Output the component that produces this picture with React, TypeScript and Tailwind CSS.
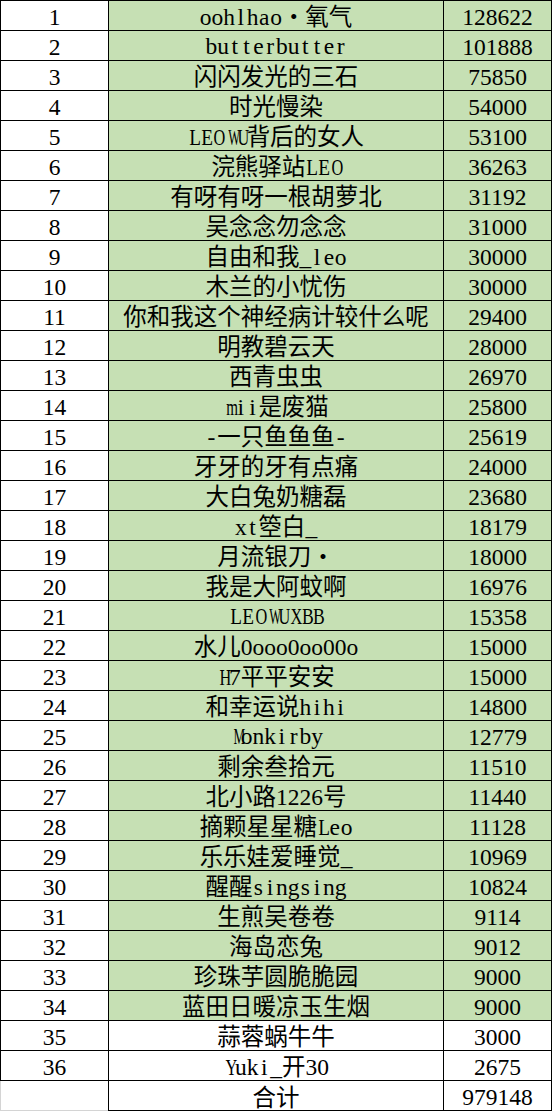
const ROWS: [string, number][] = [
  ["oohlhao•氧气", 128622],
  ["butterbutter", 101888],
  ["闪闪发光的三石", 75850],
  ["时光慢染", 54000],
  ["LEOWU背后的女人", 53100],
  ["浣熊驿站LEO", 36263],
  ["有呀有呀一根胡萝北", 31192],
  ["吴念念勿念念", 31000],
  ["自由和我_leo", 30000],
  ["木兰的小忧伤", 30000],
  ["你和我这个神经病计较什么呢", 29400],
  ["明教碧云天", 28000],
  ["西青虫虫", 26970],
  ["mii是废猫", 25800],
  ["-一只鱼鱼鱼-", 25619],
  ["牙牙的牙有点痛", 24000],
  ["大白兔奶糖磊", 23680],
  ["xt箜白_", 18179],
  ["月流银刀•", 18000],
  ["我是大阿蚊啊", 16976],
  ["LEOWUXBB", 15358],
  ["水儿0ooo0oo00o", 15000],
  ["H7平平安安", 15000],
  ["和幸运说hihi", 14800],
  ["Monkirby", 12779],
  ["剩余叁拾元", 11510],
  ["北小路1226号", 11440],
  ["摘颗星星糖Leo", 11128],
  ["乐乐娃爱睡觉_", 10969],
  ["醒醒singsing", 10824],
  ["生煎吴卷卷", 9114],
  ["海岛恋兔", 9012],
  ["珍珠芋圆脆脆园", 9000],
  ["蓝田日暖凉玉生烟", 9000],
  ["蒜蓉蜗牛牛", 3000],
  ["Yuki_开30", 2675],
];

const GREEN_ROWS = 34;

// Times advance widths (em) for glyphs wider than half-width
const WIDE: Record<string, number> = {
  m: 0.778, w: 0.722,
  A: 0.722, B: 0.667, C: 0.667, D: 0.722, E: 0.611, F: 0.556, G: 0.722, H: 0.722,
  K: 0.722, L: 0.611, M: 0.889, N: 0.722, O: 0.722, P: 0.556, Q: 0.722, R: 0.667,
  S: 0.556, T: 0.611, U: 0.722, V: 0.722, W: 0.944, X: 0.722, Y: 0.722, Z: 0.611,
};

// SimSun-style: half-width latin cells, full-width CJK
function Name({ text }: { text: string }) {
  const parts = text.split(/([\x20-\x7e]+)/).filter(Boolean);
  return (
    <span className="whitespace-nowrap leading-[24px]">
      {parts.map((p, i) =>
        /^[\x20-\x7e]+$/.test(p) ? (
          <span key={i} className="font-['Liberation_Serif',serif] text-[23.5px] leading-[24px]">
            {p.split("").map((ch, j) => {
              const w = WIDE[ch];
              return (
                <span key={j} className="inline-block w-[11.75px] text-center">
                  <span
                    className="inline-block origin-center"
                    style={w ? { transform: `scaleX(${(0.5 / w).toFixed(3)})` } : undefined}
                  >
                    {ch}
                  </span>
                </span>
              );
            })}
          </span>
        ) : (
          <span key={i} className="font-['Noto_Sans_CJK_SC',sans-serif] text-[23.5px] leading-[24px]">
            {p}
          </span>
        )
      )}
    </span>
  );
}

const cell = "h-[30px] border-t border-l border-black flex justify-center items-center pt-[3px] leading-[24px]";
const serif = "font-['Liberation_Serif',serif] text-[23.5px]";

export default function App() {
  return (
    <div className="w-[552px] bg-white text-black">
      {ROWS.map(([name, amount], i) => {
        const green = i < GREEN_ROWS;
        return (
          <div key={i} className="flex">
            <div className={`${cell} ${serif} w-[108px]`}>{i + 1}</div>
            <div className={`${cell} w-[335px] ${green ? "bg-[#c6e0b4]" : ""}`}>
              <Name text={name} />
            </div>
            <div className={`${cell} ${serif} w-[109px] border-r ${green ? "bg-[#c6e0b4]" : ""}`}>
              {amount}
            </div>
          </div>
        );
      })}
      {/* total row */}
      <div className="flex">
        <div className="h-[31px] w-[108px] border-t border-black">
          <div className="h-full border-l border-b border-[#d4d4d4]" />
        </div>
        <div className="h-[31px] w-[335px] border-t border-l border-b border-black flex justify-center items-center leading-[24px]">
          <span className="font-['Noto_Sans_CJK_SC',sans-serif] text-[23.5px] leading-[24px]">合计</span>
        </div>
        <div className={`${cell} ${serif} h-[31px] w-[109px] border-r border-b pt-[2px]`}>979148</div>
      </div>
    </div>
  );
}
